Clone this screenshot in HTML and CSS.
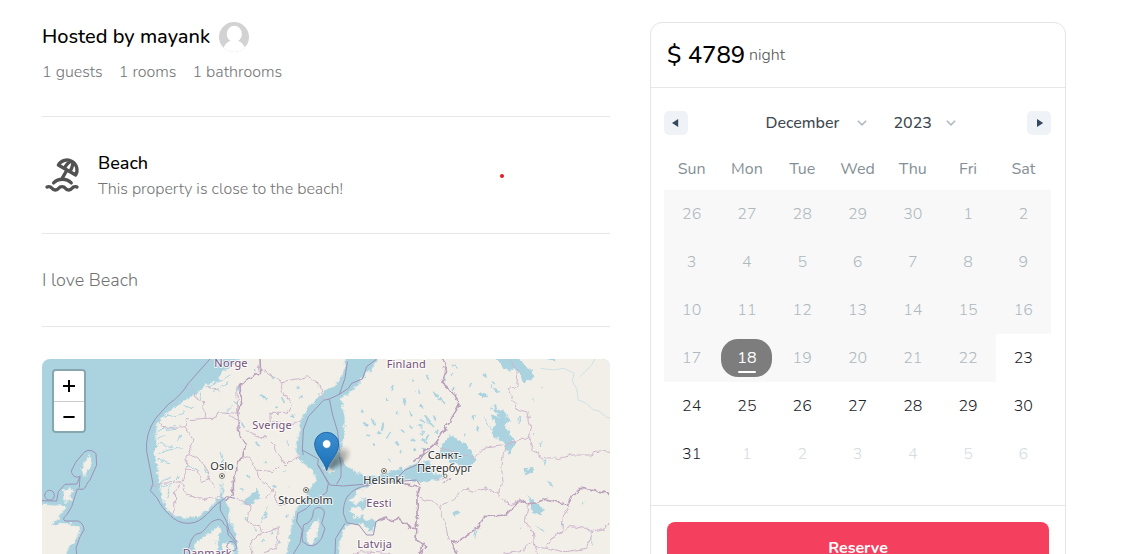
FILE: index.html
```
<!DOCTYPE html>
<html lang="en">
<head>
<meta charset="utf-8">
<title>Beach listing</title>
<link rel="stylesheet" href="styles.css">
</head>
<body>
<main class="page">
  <section class="info">
    <div class="host">
      <h2 class="host-name">Hosted by mayank</h2>
      <svg class="avatar" viewBox="0 0 30 30"><defs><clipPath id="round"><circle cx="15" cy="15" r="15"/></clipPath></defs><g clip-path="url(#round)"><path fill="#d2d2d2" d="M0 0h30v30H0z"/><ellipse cx="15.3" cy="12" rx="7.6" ry="8.3" fill="#fff"/><path fill="#fff" d="M3.500 30c.5-5 3-9 7.500-11h8.500c4.500 2 7 6 7.500 11z"/></g></svg>
    </div>
    <div class="facts"><span>1 guests</span><span>1 rooms</span><span>1 bathrooms</span></div>
    <hr>
    <div class="category">
      <svg class="beach" viewBox="0 0 24 24"><path d="M17.553 16.750a7.500 7.500 0 0 0-10.606 0M18 3.804A6 6 0 0 0 9.804 6l10.392 6A6 6 0 0 0 18 3.804zM16.732 10c1.658-2.870 2.225-5.644 1.268-6.196S14.925 5.130 13.268 8M15 9l-3 5.196"/><path d="M3 19.250A2.400 2.400 0 0 1 4 19a2.400 2.400 0 0 1 2 1 2.400 2.400 0 0 0 2 1 2.400 2.400 0 0 0 2-1 2.400 2.400 0 0 1 2-1 2.400 2.400 0 0 1 2 1 2.400 2.400 0 0 0 2 1 2.400 2.400 0 0 0 2-1 2.400 2.400 0 0 1 2-1 2.400 2.400 0 0 1 1 .25"/></svg>
      <div class="category-text"><h3>Beach</h3><p>This property is close to the beach!</p></div>
      <i class="dot"></i>
    </div>
    <hr>
    <p class="description">I love Beach</p>
    <hr>
    <div class="map">
      <svg class="map-canvas" viewBox="6 12 1704 585" width="568" height="195">
        <defs>
          <filter id="coast" x="0" y="0" width="1720" height="610" filterUnits="userSpaceOnUse"><feTurbulence type="fractalNoise" baseFrequency=".07" numOctaves="3" seed="4"/><feDisplacementMap in="SourceGraphic" scale="20" xChannelSelector="R" yChannelSelector="G"/></filter>
          <filter id="jag" x="0" y="0" width="1720" height="610" filterUnits="userSpaceOnUse"><feTurbulence type="fractalNoise" baseFrequency=".05" numOctaves="2" seed="9"/><feDisplacementMap in="SourceGraphic" scale="18" xChannelSelector="R" yChannelSelector="G"/></filter>
          <filter id="soft" x="-50%" y="-50%" width="200%" height="200%"><feGaussianBlur stdDeviation="6"/></filter>
          <linearGradient id="pin" x1="0" y1="0" x2="0" y2="1"><stop stop-color="#3b8fd0"/><stop offset="1" stop-color="#1b6fb8"/></linearGradient>
          <linearGradient id="shade" x1="0" y1="1" x2="1" y2="0"><stop stop-color="#222" stop-opacity=".7"/><stop offset="1" stop-color="#222" stop-opacity=".15"/></linearGradient>
        </defs>
        <path fill="#aad3df" d="M0 0h1720v610H0z"/>
        <g class="land" filter="url(#coast)">
          <path d="M650-20 600 12 550 50 530 80 500 88 480 112 440 132 400 158 370 185 350 210 345 240 352 270 343 300 354 330 355 370 362 400 368 440 390 472 430 490 470 484 510 455 540 425 545 375 551 425 565 460 570 500 590 540 596 620H735L750 540 756 500 765 465 792 440 803 410 828 375 820 345 785 322 768 290 775 230 785 190 810 150 845 115 890 85 910 50 922-20z"/>
          <path d="M1015-20 1008 20 980 60 940 105 902 130 915 190 912 240 900 290 907 322 940 345 970 362 1010 365 1070 345 1130 325 1170 318 1180 355 1205 362 1195 374 1140 382 1110 376 1050 380 990 390 945 410 952 425 975 430 985 450 965 475 972 490 1010 495 1003 525 985 530 975 512 950 505 915 515 900 560 893 620H1740V-20z"/>
          <path d="M0 450 76 452 62 480 35 508 90 508 120 515 112 545 85 580 78 620H0zM72 405 95 400 90 440 70 438zM148 300 152 330 135 365 125 340z"/>
          <path d="M455 597 468 563 500 540 538 514 545 530 530 555 535 597zM545 570 575 560 580 597 550 597zM808 520 835 490 832 540 810 570 798 550zM850 342 865 336 885 345 870 355zM928 432 955 420 972 435 945 445zM928 465 955 452 980 475 945 490z"/>
        </g>
        <g class="water" filter="url(#coast)">
          <path d="M1200 275 1230 240 1245 250 1272 265 1295 290 1307 318 1280 338 1240 325 1205 300zM1355 150 1390 168 1405 195 1395 212 1425 262 1408 298 1385 258 1355 238 1365 210 1350 175 1380 190zM1368 8H1425L1475 45 1478 75 1450 80 1435 50 1390 38zM605 445 655 400 658 430 630 452zM665 500 685 450 678 485zM1235 475 1250 465 1265 472 1245 485zM1462 420 1485 440 1515 465 1500 482 1480 475zM1450 340 1475 338 1480 352 1455 358zM1518 368 1540 395 1535 398zM1510 310 1518 325 1513 332zM1320 115 1345 120 1340 130 1320 128zM1515 8H1550L1545 22zM1500 262 1508 258 1507 275 1500 278zM1435 185 1443 182 1442 203 1436 205zM1352 90 1378 110 1365 115z"/>
        </g>
        <g class="lakes" filter="url(#jag)">
          <path class="lakeland" d="M970 205l14 12M995 190l8 18M1012 230l12 5M1030 205l-5 22M1042 250l10-18M980 240l6 6M1070 170l7 9M1090 130l8 17M1110 165l6 22M1105 210l14 8M1140 190l14 14M1150 225l-8 16M1165 200l14 18M1170 240l-12 14M1185 180l6 16M1195 225l-8 12M1080 225l12 6M1065 260l14 10M1115 250l10 9M1040 125l6 10M1060 95l-6 8M1130 105l8 12M1115 70l6 9M1180 110l15 14M1160 60l5 12M1210 70l8 7M1240 30l9 8M1235 100l8 3M1285 95l7-10M1325 55l18 12M1305 180l-5 12M1315 220l-8 7M1270 240l5 2M1355 80l12 10M1230 58l10-6M1200 130l10 18M1140 150l9 12M1080 290l6 4M1120 285l8-5M1000 270l6 5M1148 280l10 8M1050 310l6 3M960 165l8 5M1130 212l18 3M1145 255l14 6M1155 180l10 22"/>
          <path d="M590 95l15 15M660 120l20 12M725 125l8 22M690 60l8 12M640 45l9 7M605 200l5 18M650 260l8 15M710 205l4 14M740 260l5 13M580 140l10 8M770 95l9 5M705 155l8 4M675 320l9 8M730 350l8-4M700 390l5 8M740 395l7-3M620 360l8 10M600 400l7 5M720 430l5 15M690 530l6 8M645 520l5 12M665 560l8-5M715 555l6 10M755 180l7 5M780 130l8-5M615 490l7 6M740 480l5 4"/>
          <path class="fjord" d="M350 225l65-5M350 265l30 3 20 10M350 293l75-15M352 315l38 8M360 383l35-18M365 395l25-5 25-25M375 180l30 8 30-20M430 150l30 8M480 110l5 25M500 95l50-20 25-15M520 110l45-30M380 430l15-40M540 290l15 60M490 330l10 25M410 260l10-20M435 330l45 20M555 170l20-20M350 250l28-8M395 210l24-2"/>
          <path class="fjord" d="M1435 185v16M1475 130l10 10M1480 240l5-6M1350 155l60 45M1330 190l35 45M1505 95l-4 4M1300 550l5-20M1310 520v15M1630 440l-5 10M1655 525l-3 45M1570 495v15M1480 510l30 20M1440 520l5 0"/>
        </g>
        <path class="river" d="M1502 40l40 5 30-5 30 15-5 25 13 20 5 35 25 10 20 20 15 2 25 20 15 3M1620 65l15-15 20-20 10-18"/>
        <g class="sea-border">
          <path d="M510 12 445 85Q425 120 385 148L347 190Q315 235 320 290L330 340 339 387 331 407 352 430Q365 460 400 490 430 512 465 502C500 490 520 450 541 440L560 425 585 430M541 440V465L560 500 568 530 590 560M445 597C445 570 455 545 470 537 490 535 495 520 512 503 530 490 548 490 551 507L560 515 565 540 590 565M560 575C565 555 580 555 588 570S575 597 560 575"/>
          <path d="M6 437 50 438 55 410 75 388 110 387 120 365C105 370 95 360 94 348L107 322 132 292Q150 278 168 296L170 330 150 375C140 382 140 395 130 403L112 402 95 455 80 480 Q65 490 75 498H115Q132 507 132 525L120 545 108 580 110 597M14 420C16 400 44 402 43 422S14 438 14 420M120 362 118 398"/>
          <path d="M1010 12 980 35 967 72 935 85 925 100 898 118 868 132 850 136 805 185 790 225 787 285 835 312 833 330 870 390 910 393 945 390 1065 380 1130 375 1140 390M922 20 915 70 898 118M868 132 878 180 893 230 898 285M787 285 790 300M835 330 865 385 860 412 820 440 800 460 773 475 770 500 787 525 780 565 760 597M1070 370 1095 345 1130 330 1150 300 1170 285M820 470C820 455 855 450 853 477L845 505 855 520 845 550Q820 590 788 560C783 545 790 530 790 510Q820 500 820 470M990 390C920 400 910 440 910 475L920 503 957 510 980 540H1000L1008 500 1040 485M915 505 887 550 885 597M898 305 903 325V365L890 388"/>
        </g>
        <g class="border" filter="url(#jag)">
          <path class="thick" d="M660 12 662 55 615 75 600 95 605 145 592 170 597 235 615 265 605 305 590 325 590 350 580 375 580 420 555 435M1205 12 1220 45 1205 85 1245 120 1257 150 1230 200 1180 270 1120 320M1010 497 1040 487 1060 500 1080 490 1110 520 1130 520 1128 555 1160 575 1140 597M1080 385 1120 390 1140 395 1130 430 1135 490 1125 515M1232 560 1260 555 1315 520 1330 485 1400 480 1440 435 1465 450 1520 432 1585 450 1600 420 1620 400 1710 415M1232 560 1250 597M1140 597 1145 570"/>
          <path d="M445 85 460 105 465 130 490 140 495 190 440 195 435 215 370 218M495 190 525 190 530 170 595 175M347 190 370 218M435 215 462 255 443 295 437 345 425 380 365 385 335 395M443 295 485 320 505 350 510 380 525 395M437 345 475 350 485 380 510 370M425 380 403 410 405 465 390 487M425 385 440 420 475 430 495 435 535 425 545 430M590 95 595 190 600 235M535 110l-35-20"/>
          <path d="M655 35 690 60 725 80 805 65 840 90 850 130M725 80 730 110 755 145 740 175 690 175 690 200 770 205 790 190M570 185 605 195M615 225 655 245 680 245 705 270 710 290 735 330 780 300M605 305 630 310 650 345 700 350 715 335M650 345 655 365 690 395 705 420 715 450 745 440M590 430 630 450 625 500 660 515 665 535 635 555 635 597M660 540 715 515 710 580 670 590M700 400 680 430"/>
          <path d="M1405 12 1435 45 1430 95 1405 100 1420 140 1435 165 1460 170 1472 215 1465 245 1480 290 1510 308 1560 310 1600 300 1650 300 1680 290 1710 295M1465 250 1440 250 1395 272 1390 295 1385 340 1390 385 1370 415 1340 400 1300 410 1270 400 1235 435 1200 460 1215 500 1225 555M1180 270 1240 290 1300 310 1330 280 1390 272M1140 430 1180 440 1200 460M1370 415 1410 450 1450 435M1465 450 1455 500 1480 530 1485 575 1520 580 1535 550 1565 530 1570 480 1590 450M1520 580 1575 590 1640 580 1655 530 1690 520 1710 505M1390 597 1440 590 1480 560 1490 597M1535 550 1570 530 1590 515 1640 520 1655 530M1180 365 1200 375 1230 370 1210 385M940 597 960 590 1050 595"/>
        </g>
        <g class="labels">
          <text class="country" x="523" y="35">Norge</text><text class="country" x="1040" y="39">Finland</text><text class="country" x="637" y="223">Sverige</text><text class="country" x="979" y="455">Eesti</text><text class="country" x="952" y="578">Latvija</text><text class="country" x="428" y="605">Danmark</text>
          <text x="511" y="346">Oslo</text><text x="715" y="447">Stockholm</text><text x="970" y="388">Helsinki</text><text x="1163" y="311">Санкт-</text><text x="1131" y="351">Петербург</text>
        </g>
        <g class="capital"><circle cx="546" cy="363" r="7.500"/><circle cx="798" cy="405" r="7.500"/><circle cx="1032" cy="348" r="7.500"/><circle cx="1216" cy="363" r="5"/></g>
        <g fill="#333"><circle cx="546" cy="363" r="3"/><circle cx="798" cy="405" r="3"/><circle cx="1032" cy="348" r="3"/></g>
        <path filter="url(#soft)" fill="url(#shade)" d="M860 347 884 295Q905 273 925 285 932 303 908 325z"/>
        <path fill="url(#pin)" stroke="#2368a5" stroke-width="3" d="M860 347C854 318 824 298 824 267A36 35 0 0 1 896 267C896 298 866 318 860 347z"/><circle cx="860" cy="267" r="12.500" fill="#fff" stroke="#2368a5" stroke-width="1.500"/>
      </svg>
      <div class="zoom"><button aria-label="Zoom in"><svg viewBox="0 0 30 30"><path d="M9 15h12M15 9v12"/></svg></button><button aria-label="Zoom out"><svg viewBox="0 0 30 30"><path d="M9 15h12"/></svg></button></div>
    </div>
  </section>
  <aside class="card">
    <div class="price"><strong>$ 4789</strong><span>night</span></div>
    <hr>
    <div class="calendar">
      <div class="nav">
        <button class="step"><svg viewBox="0 0 24 24"><path d="M14.200 8v8L8 12z"/></svg></button>
        <div class="pickers"><span class="month">December</span><svg class="chevron" viewBox="0 0 10 6"><path d="m.8.7 4.200 4.200L9.200.7"/></svg><span class="year">2023</span><svg class="chevron" viewBox="0 0 10 6"><path d="m.8.7 4.200 4.200L9.200.7"/></svg></div>
        <button class="step"><svg viewBox="0 0 24 24"><path d="M10 8v8l6.200-4z"/></svg></button>
      </div>
      <div class="week"><span>Sun</span><span>Mon</span><span>Tue</span><span>Wed</span><span>Thu</span><span>Fri</span><span>Sat</span></div>
      <div class="days">
        <span class="off">26</span><span class="off">27</span><span class="off">28</span><span class="off">29</span><span class="off">30</span><span class="off">1</span><span class="off">2</span>
        <span class="off">3</span><span class="off">4</span><span class="off">5</span><span class="off">6</span><span class="off">7</span><span class="off">8</span><span class="off">9</span>
        <span class="off">10</span><span class="off">11</span><span class="off">12</span><span class="off">13</span><span class="off">14</span><span class="off">15</span><span class="off">16</span>
        <span class="off">17</span><span class="off"><b class="today">18</b></span><span class="off">19</span><span class="off">20</span><span class="off">21</span><span class="off">22</span><span>23</span>
        <span>24</span><span>25</span><span>26</span><span>27</span><span>28</span><span>29</span><span>30</span>
        <span>31</span><span class="next">1</span><span class="next">2</span><span class="next">3</span><span class="next">4</span><span class="next">5</span><span class="next">6</span>
      </div>
    </div>
    <hr>
    <div class="action"><button class="reserve">Reserve</button></div>
  </aside>
</main>
</body>
</html>
```
FILE: styles.css
```
* { box-sizing: border-box; }
body { margin: 0; font: 300 16px/24px Nunito, Lato, sans-serif; color: #000; background: #fff; }
h2, h3, p { margin: 0; }
hr { width: 100%; margin: 0; border: 0; height: 1px; background: #e5e7eb; flex: none; }
button { border: 0; padding: 0; font: inherit; }
svg { display: block; }
.page { height: 554px; overflow: hidden; padding: 22px 60px 0 42px; display: grid; grid-template-columns: 568px 416px; gap: 40px; }
.info { display: flex; flex-direction: column; }
.host { display: flex; align-items: center; gap: 8px; height: 30px; }
.host-name { font-size: 20px; line-height: 28px; font-weight: 500; width: 169px; white-space: nowrap; }
.avatar { width: 30px; height: 30px; }
.facts { display: flex; gap: 16px; margin: 8px 0 32px; color: #737373; }
.category { display: flex; align-items: center; gap: 16px; margin: 32px 0; height: 52px; }
.beach { width: 40px; height: 40px; fill: none; stroke: #525252; stroke-width: 2; stroke-linecap: round; stroke-linejoin: round; }
.category-text { width: 400px; }
.category-text h3 { font-size: 18px; line-height: 28px; font-weight: 500; }
.category-text p { color: #737373; }
.dot { width: 4px; height: 4px; border-radius: 50%; background: #e01b24; margin: 2px 0 0 -14px; }
.description { margin: 32px 0; font-size: 18px; line-height: 28px; color: #737373; }
.map { position: relative; height: 195px; margin-top: 32px; flex: none; overflow: hidden; border-radius: 8px 8px 0 0; }
.zoom { position: absolute; left: 10px; top: 10px; border: 2px solid #87a7b0; border-radius: 4px; overflow: hidden; }
.zoom button { display: block; width: 30px; height: 30px; background: #fff; }
.zoom button + button { border-top: 1px solid #ccc; }
.zoom svg { width: 30px; height: 30px; fill: none; stroke: #000; stroke-width: 2; }
.zoom button + button svg { height: 28px; }
.land { fill: #f2efe9; stroke: #dfe8e5; stroke-width: 2; }
.water { fill: #aad3df; }
.lakes { fill: none; stroke: #aad3df; stroke-width: 5; }
.lakeland { stroke-width: 6; }
.fjord { stroke-width: 3; }
.river { fill: none; stroke: #cde1e5; stroke-width: 3; }
.sea-border { fill: none; stroke: #9b91b5; stroke-width: 3; stroke-linejoin: round; }
.border { fill: none; stroke: #cdb5cc; stroke-width: 3; stroke-linejoin: round; }
.thick { stroke: #baa0bb; stroke-width: 5; }
.labels { font: 400 33px "Noto Sans", sans-serif; fill: #333; stroke: #fff; stroke-width: 6px; stroke-opacity: .8; paint-order: stroke; stroke-linejoin: round; }
.country { fill: #765078; letter-spacing: .6px; }
.capital { fill: #f7f4e5; stroke: #444; stroke-width: 2; }
.card { height: 600px; border: 1px solid #e5e5e5; border-radius: 12px; }
.price { display: flex; align-items: center; gap: 4px; padding: 16px; height: 64px; }
.price strong { width: 78px; font-size: 24px; line-height: 32px; font-weight: 500; white-space: nowrap; }
.price span { color: #525252; }
.calendar { height: 417px; padding: 23px 14px 0 13px; }
.nav { display: flex; justify-content: space-between; height: 24px; }
.step { width: 24px; height: 24px; border-radius: 5px; background: #eff2f7; }
.step svg { width: 24px; height: 24px; fill: #34495e; }
.pickers { display: flex; align-items: center; padding-left: 6px; font-weight: 500; color: #3e484f; }
.month { width: 91px; }
.year { width: 52px; margin-left: 27px; }
.chevron { width: 10px; height: 6px; fill: none; stroke: #aeb9bf; stroke-width: 1.500; }
.week, .days { display: grid; grid-template-columns: repeat(7, 1fr); text-align: center; }
.week { margin: 22px 0 9px; color: #849095; font-weight: 400; }
.days { grid-auto-rows: 48px; line-height: 48px; color: #1d2429; }
.off { background: #f8f8f8; color: #aeb9bf; }
.next { color: #d5dce0; }
.today { position: relative; display: block; width: 51px; height: 38px; margin: 5px auto; line-height: 38px; border-radius: 17px; background: #7d7d7d; color: #fff; font-weight: 400; }
.today::after { content: ""; position: absolute; left: 17px; bottom: 4px; width: 18px; height: 2px; background: #fff; border-radius: 1px; }
.action { padding: 16px; }
.reserve { display: block; width: 100%; height: 52px; border-radius: 8px; background: #f43f5e; color: #fff; font-weight: 700; }
```
